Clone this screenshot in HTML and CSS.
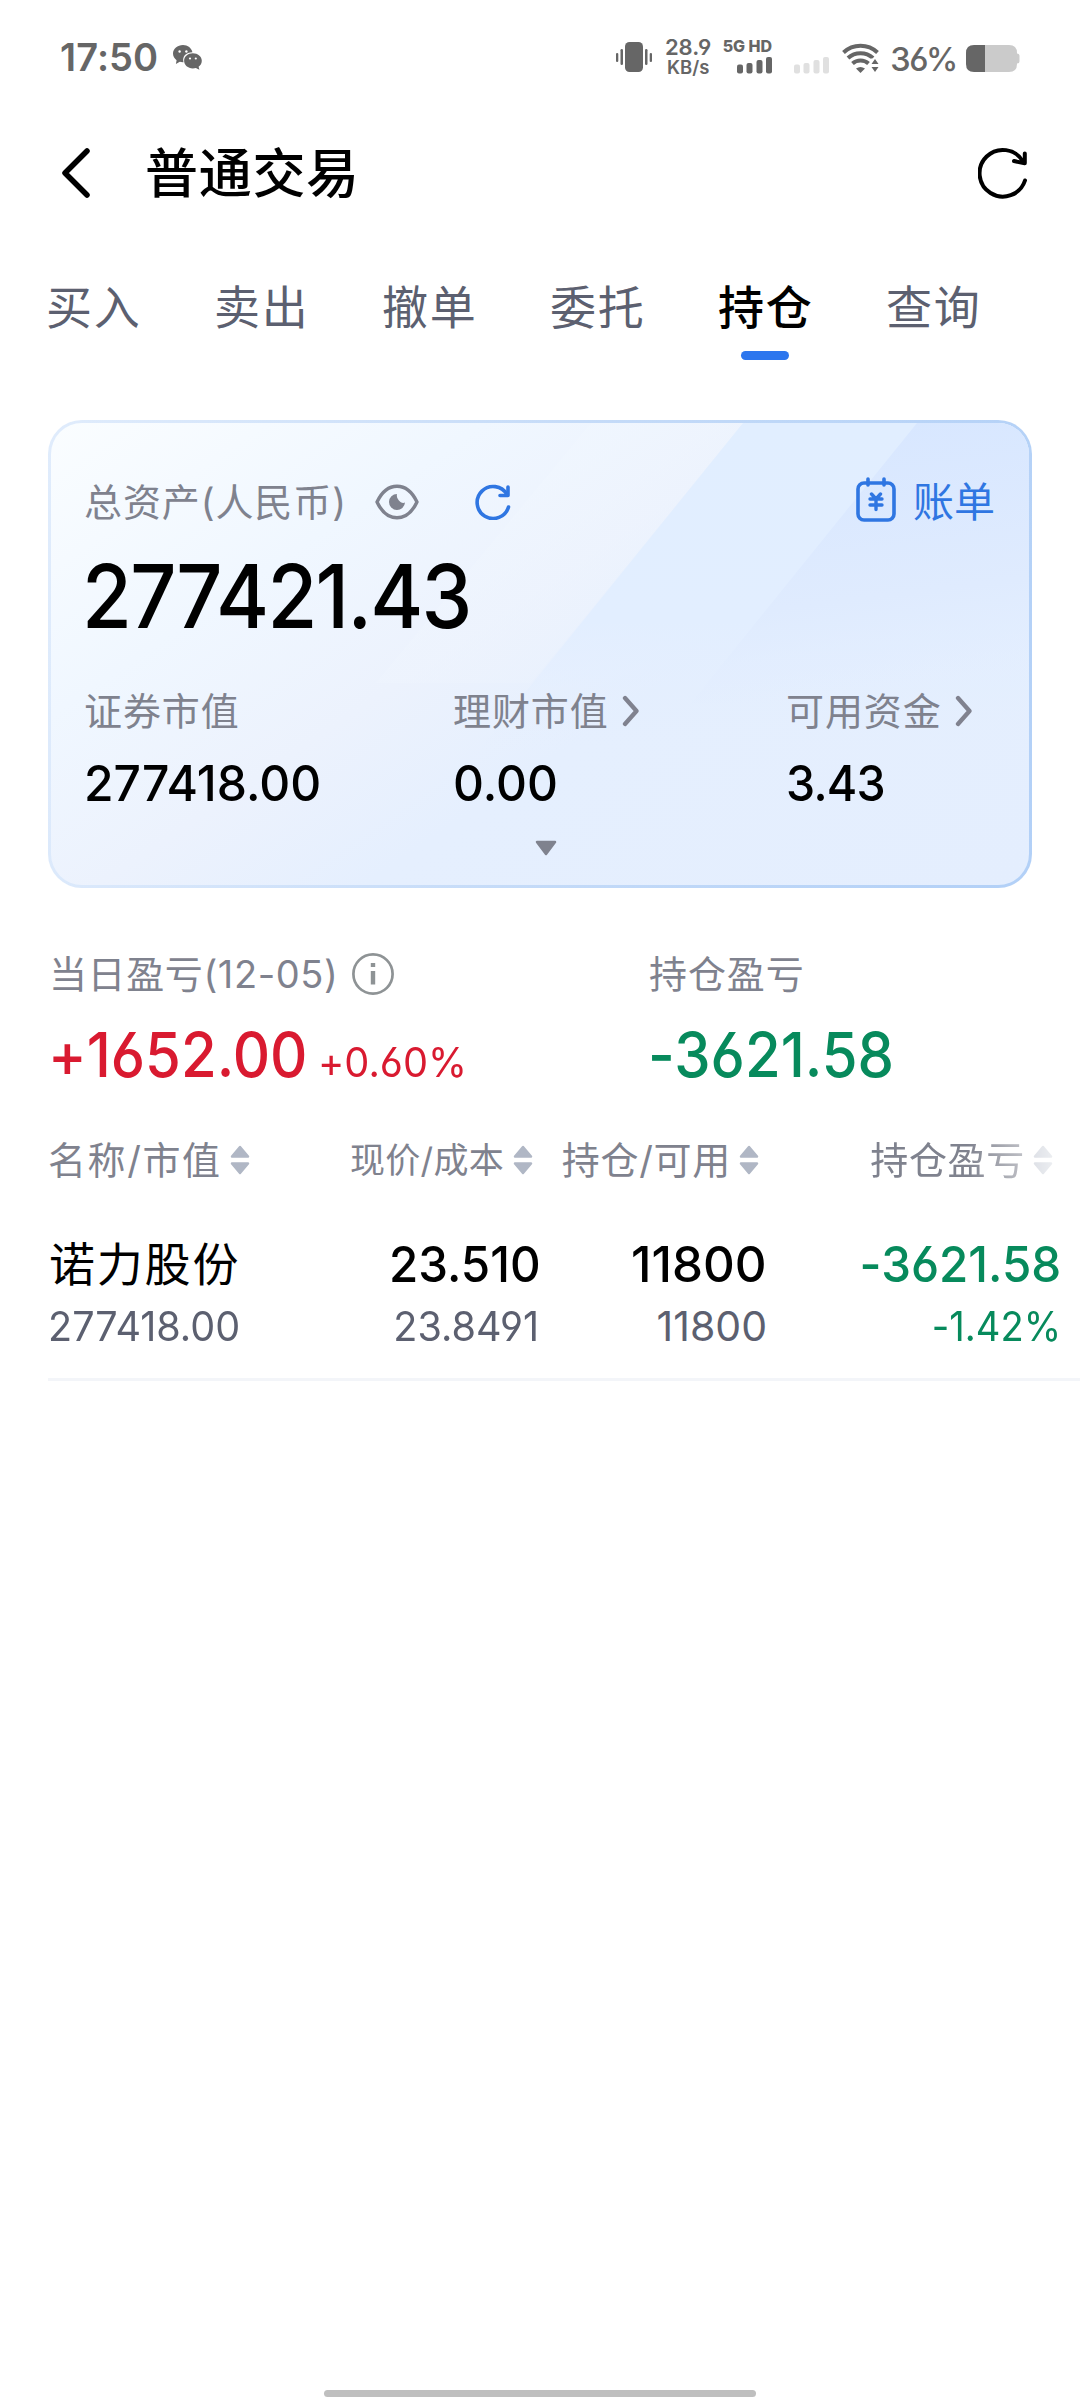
FILE: index.html
```html
<!DOCTYPE html>
<html lang="zh-CN">
<head>
<meta charset="utf-8">
<title>普通交易</title>
<link rel="stylesheet" href="styles.css">
</head>
<body>
<svg class="defs" width="0" height="0">
  <symbol id="sort" viewBox="0 0 20 30"><path d="M10 2 18 11.500H2ZM10 28 18 18.500H2Z" fill="#b0b7c5" stroke="#b0b7c5" stroke-width="2.500" stroke-linejoin="round"/></symbol>
  <symbol id="chev" viewBox="0 0 18 32"><path d="M3 3 14.500 16 3 29" fill="none" stroke="#80828f" stroke-width="4.300" stroke-linecap="round" stroke-linejoin="round"/></symbol>
</svg>
<header class="status">
  <span class="clock">17:50</span>
  <svg class="wechat" width="29" height="26" viewBox="0 0 29 26"><path fill="#666" d="M10 0C4.500 0 0 3.800 0 8.600c0 2.700 1.400 5 3.600 6.600L2.900 19l3.900-2.200c1.200.3 2.300.5 3.700.4C9 11.500 13 7.300 19.400 7.300 18.700 3.200 14.700 0 10 0Z"/><path fill="#666" d="M19.800 8.300c-4.900 0-8.700 3.300-8.700 7.500s3.800 7.600 8.700 7.600c1.100 0 2.200-.2 3.100-.5l3.500 1.900-.8-3c2-1.400 3.200-3.600 3.200-6 0-4.200-4-7.500-9-7.500Z"/><g fill="#fff"><circle cx="6.600" cy="6.500" r="1.200"/><circle cx="13.400" cy="6.500" r="1.200"/><circle cx="17" cy="13.500" r="1.100"/><circle cx="22.800" cy="13.500" r="1.100"/></g></svg>
  <div class="indicators">
    <svg class="vibrate" width="36" height="30" viewBox="0 0 36 30" fill="#666"><rect x="9" width="18" height="30" rx="4.500"/><rect x="4.500" y="7" width="2.500" height="16" rx="1.200"/><rect y="11" width="2.300" height="9" rx="1.100"/><rect x="29" y="7" width="2.500" height="16" rx="1.200"/><rect x="33.700" y="11" width="2.300" height="9" rx="1.100"/></svg>
    <div class="speed"><span class="rate">28.9</span><span class="unit">KB/s</span></div>
    <div class="cell"><span class="net">5G HD</span><svg width="35" height="17" viewBox="0 0 35 17" fill="#666"><rect y="7.500" width="6" height="9" rx="2"/><rect x="9.500" y="6" width="6" height="10.500" rx="2"/><rect x="19.500" y="3" width="6" height="13.500" rx="2"/><rect x="29" width="6" height="16.500" rx="2"/></svg></div>
    <svg class="nosim" width="35" height="17" viewBox="0 0 35 17" fill="#e0e0e0"><rect y="7.500" width="6" height="9" rx="2"/><rect x="9.500" y="6" width="6" height="10.500" rx="2"/><rect x="19.500" y="3" width="6" height="13.500" rx="2"/><rect x="29" width="6" height="16.500" rx="2"/></svg>
    <svg class="wifi" width="37" height="30" viewBox="0 0 37 30"><g fill="none" stroke="#666" stroke-width="4"><path d="M1.500 9.500C11 .5 26 .5 35.500 9.500"/><path d="M6 15C13 8.500 24 8.500 31 15"/><path d="M10.500 20.500C15 16.500 22 16.500 26.500 20.500"/></g><path fill="#666" d="M14 25.500q4.500-3 9 0L18.500 30Z"/><path fill="#fff" d="M28.500 15.500h10V30h-10z"/><path fill="#666" d="M33 16l3.500 5h-7zM33 29l3.500-5h-7z"/></svg>
    <span class="pct">36%</span>
    <svg class="battery" width="54" height="27" viewBox="0 0 54 27"><path fill="#cbcbcb" d="M18 0h25q8 0 8 8v.5q2.500 0 2.500 2.500v5q0 2.500-2.500 2.500v.5q0 8-8 8H18z"/><path fill="#666" d="M19 0v27H8q-8 0-8-8V8q0-8 8-8z"/></svg>
  </div>
</header>

<nav class="titlebar">
  <svg class="back" width="28" height="50" viewBox="0 0 28 50"><path d="M25 3 3 25 25 47" fill="none" stroke="#000" stroke-width="5.500" stroke-linecap="round" stroke-linejoin="round"/></svg>
  <h1>普通交易</h1>
  <svg class="reload" width="50" height="52" viewBox="0 0 50 52" fill="none" stroke="#000" stroke-width="4" stroke-linecap="round" stroke-linejoin="round"><path d="M47 33.500A23.300 23.300 0 1 1 45 14.500"/><path d="M46.800 6.500V16.300L36 14"/></svg>
</nav>

<nav class="tabs">
  <span class="tab">买入</span>
  <span class="tab">卖出</span>
  <span class="tab">撤单</span>
  <span class="tab">委托</span>
  <span class="tab active">持仓</span>
  <span class="tab">查询</span>
</nav>

<section class="card">
  <svg class="sheen" width="978" height="462" viewBox="0 0 978 462">
    <defs>
      <linearGradient id="a" x1="0" y1="0" x2="0" y2="1"><stop offset="0" stop-color="#e1eeff"/><stop offset=".6" stop-color="#e2eeff"/><stop offset="1" stop-color="#e4eefe" stop-opacity="0"/></linearGradient>
      <linearGradient id="b" x1=".6" y1="0" x2=".75" y2="1"><stop offset="0" stop-color="#d8e7ff"/><stop offset=".6" stop-color="#dfebfe"/><stop offset="1" stop-color="#e4eefe" stop-opacity="0"/></linearGradient>
      <linearGradient id="c" x1="0" y1="0" x2="1" y2="1"><stop offset="0" stop-color="#f2f8ff" stop-opacity=".8"/><stop offset="1" stop-color="#edf3fd" stop-opacity="0"/></linearGradient>
    </defs>
    <path fill="url(#c)" d="M540 0H692L480 260H325Z"/>
    <path fill="url(#a)" d="M692 0H978V330H425Z"/>
    <path fill="url(#b)" d="M866 0H978V280H640Z"/>
  </svg>
  <div class="summary">
    <span class="label">总资产(人民币)</span>
    <svg class="eye" width="44" height="36" viewBox="0 0 44 36"><path d="M2 18C12-3 32-3 42 18 32 39 12 39 2 18Z" fill="none" stroke="#7f828e" stroke-width="3.400" stroke-linejoin="round"/><path d="M22 10A8 8 0 1 0 30 18.500Q28 19.500 25.500 18 21 14.500 22 10Z" fill="#7f828e"/></svg>
    <svg class="refresh" width="36" height="36" viewBox="0 0 36 36" fill="none" stroke="#2f76e2" stroke-width="3.600" stroke-linecap="round" stroke-linejoin="round"><path d="M33.500 23A16 16 0 1 1 32 10.500"/><path d="M33 3V11.500H25"/></svg>
    <a class="bill">
      <svg width="40" height="45" viewBox="0 0 40 45" fill="none" stroke="#2f76e2" stroke-width="3.600" stroke-linecap="round"><rect x="2" y="6" width="36" height="37" rx="6"/><path d="M12 2V8M28 2V8"/><path d="M15.500 17 20 22 24.500 17M14 22H26M14 28H26M20 22V32.500" stroke-width="3.400"/></svg>
      <span>账单</span>
    </a>
  </div>
  <div class="total"><span class="num">277421.43</span></div>
  <div class="figures">
    <div class="figure"><div class="label"><span>证券市值</span></div><div class="amount"><span class="num">277418.00</span></div></div>
    <div class="figure"><div class="label"><span>理财市值</span><svg class="chev" width="18" height="32"><use href="#chev"/></svg></div><div class="amount"><span class="num">0.00</span></div></div>
    <div class="figure"><div class="label"><span>可用资金</span><svg class="chev" width="18" height="32"><use href="#chev"/></svg></div><div class="amount tight"><span class="num">3.43</span></div></div>
  </div>
  <svg class="expand" width="22" height="16" viewBox="0 0 22 16"><path d="M2 2H20L11 14Z" fill="#7f828e" stroke="#7f828e" stroke-width="2.500" stroke-linejoin="round"/></svg>
</section>

<section class="pnl">
  <div class="today">
    <div class="label dated"><span>当日盈亏(12-05)</span><svg class="info" width="42" height="42" viewBox="0 0 42 42"><circle cx="21" cy="21" r="19.600" fill="none" stroke="#8e9395" stroke-width="2.700"/><path fill="#8e9395" d="M18.800 10h4.400v4h-4.400zM18.800 18h4.400v13.500h-4.400z"/></svg></div>
    <div class="value up"><span class="num">+1652.00</span><small class="num">+0.60%</small></div>
  </div>
  <div class="holding">
    <div class="label">持仓盈亏</div>
    <div class="value down"><span class="num">-3621.58</span></div>
  </div>
</section>

<section class="positions">
  <div class="grid head">
    <div class="th"><span>名称/市值</span><svg width="20" height="30"><use href="#sort"/></svg></div>
    <div class="th small"><span>现价/成本</span><svg width="20" height="30"><use href="#sort"/></svg></div>
    <div class="th"><span>持仓/可用</span><svg width="20" height="30"><use href="#sort"/></svg></div>
    <div class="th fade"><span>持仓盈亏</span><svg width="20" height="30"><use href="#sort"/></svg></div>
  </div>
  <div class="grid row">
    <div class="cellbox"><div class="main name"><span>诺力股份</span></div><div class="sub"><span class="num">277418.00</span></div></div>
    <div class="cellbox"><div class="main"><span class="num">23.510</span></div><div class="sub cost"><span class="num">23.8491</span></div></div>
    <div class="cellbox"><div class="main wide"><span class="num">11800</span></div><div class="sub wide"><span class="num">11800</span></div></div>
    <div class="cellbox down"><div class="main"><span class="num">-3621.58</span></div><div class="sub"><span class="num">-1.42%</span></div></div>
  </div>
</section>
<div class="home"></div>
</body>
</html>
```
FILE: styles.css
```css
* { box-sizing: border-box; }
body {
  margin: 0;
  width: 1080px;
  height: 2400px;
  overflow: hidden;
  position: relative;
  background: #fff;
  color: #000;
  font-family: Inter, "Noto Sans CJK SC", sans-serif;
  font-feature-settings: "cv03", "cv04", "calt" 0;
}
svg { display: block; flex: none; }
.defs { position: absolute; }

/* slightly condensed figures */
.num { display: inline-block; transform: scaleX(var(--sx, .95)); transform-origin: left center; }

.status { height: 110px; display: flex; align-items: flex-start; padding: 0 60px 0 60px; color: #666; }
.clock { font-size: 38px; font-weight: 600; line-height: 40px; margin-top: 37px; letter-spacing: .1px; }
.wechat { margin: 45px 0 0 15px; }
.indicators { display: flex; margin-left: auto; }
.vibrate { margin-top: 42px; }
.speed { width: 46px; margin: 37px 0 0 13px; display: flex; flex-direction: column; align-items: center; white-space: nowrap; }
.rate { font-size: 22px; font-weight: 600; line-height: 21px; }
.unit { font-size: 18.500px; font-weight: 600; line-height: 19px; }
.cell { width: 50px; margin: 38px 0 0 11px; display: flex; flex-direction: column; align-items: flex-end; gap: 2px; white-space: nowrap; }
.net { font-size: 16px; font-weight: 800; line-height: 17px; }
.nosim { margin: 57px 0 0 22px; }
.wifi { margin: 43px 0 0 13px; }
.pct { font-size: 32.500px; font-weight: 500; line-height: 34px; margin: 43px 0 0 11px; letter-spacing: -1.300px; }
.battery { margin: 45px 0 0 9px; }

.titlebar { height: 126px; display: flex; align-items: center; padding: 0 52px 0 62px; }
.titlebar h1 { margin: 2px auto 0 55px; font-size: 53px; line-height: 60px; font-weight: 500; letter-spacing: .7px; }

.tabs { height: 184px; padding: 41px 0 0 46px; display: grid; grid-template-columns: repeat(6, 168px); }
.tab { font-size: 46px; line-height: 60px; color: #5c6070; letter-spacing: 1.800px; display: flex; flex-direction: column; align-items: flex-start; }
.tab.active { color: #000; font-weight: 500; }
.tab.active::after { content: ""; width: 48px; height: 9px; border-radius: 5px; background: #2c76ee; margin: 14px 0 0 23px; }

.card {
  position: relative;
  margin: 0 48px;
  height: 468px;
  border: 3px solid transparent;
  border-radius: 34px;
  padding: 55px 34px 0 33px;
  background:
    linear-gradient(146deg, #fafdff 0%, #f0f7ff 26%, #ecf2fd 44%, #e5effe 60%, #e4eefe 100%) padding-box,
    linear-gradient(100deg, #e0ecfc 0%, #c5dbf8 50%, #b2d0f7 100%) border-box;
}
.sheen { position: absolute; inset: 0; border-radius: 31px; }
.summary, .total, .figures, .expand { position: relative; }
.label { display: flex; align-items: center; height: 48px; line-height: 48px; font-size: 38px; color: #7f828e; letter-spacing: .9px; white-space: nowrap; }
.summary { display: flex; align-items: center; height: 48px; }
.eye { margin-left: 28px; }
.refresh { margin-left: 56px; }
.bill { margin-left: auto; display: flex; align-items: center; gap: 17px; font-size: 41px; line-height: 48px; color: #2f76e2; white-space: nowrap; }
.bill svg { margin-top: -6px; }
.total { --sx: .92; margin: 30px 0 0 -2px; font-size: 88px; line-height: 80px; font-weight: 500; letter-spacing: -1.900px; }
.figures { margin-top: 51px; display: grid; grid-template-columns: 369px 333px 1fr; }
.amount { --sx: .96; margin: 24px 0 0; font-size: 50px; line-height: 48px; font-weight: 500; }
.amount.tight { --sx: .93; letter-spacing: -.8px; }
.chev { margin-left: 13px; }
.expand { margin: 33px 0 0 451px; }

.pnl { display: grid; grid-template-columns: 600px 1fr; padding: 62px 0 0 49px; }
.label.dated { letter-spacing: .6px; }
.info { margin-left: 13px; }
.value { --sx: .935; margin: 22px 0 0 -1px; height: 70px; font-size: 62px; line-height: 70px; font-weight: 500; white-space: nowrap; }
.value small { --sx: .97; font-size: 41px; font-weight: 400; margin-left: -8px; }
.up { color: #d91a30; }
.down { color: #078a5c; }

.positions { padding: 46px 0 0 48px; }
.grid { display: grid; grid-template-columns: 203px 290px 226px 294px; }
.th { display: flex; align-items: center; justify-content: flex-end; gap: 8px; height: 48px; padding-right: 8px; font-size: 38px; line-height: 48px; letter-spacing: .7px; color: #7f828e; white-space: nowrap; }
.th:first-child { justify-content: flex-start; padding: 0; letter-spacing: 1.600px; }
.th.small { font-size: 35px; letter-spacing: .3px; gap: 9px; }
.th.fade { -webkit-mask-image: linear-gradient(90deg, #000 200px, rgba(0,0,0,.25) 285px); mask-image: linear-gradient(90deg, #000 200px, rgba(0,0,0,.25) 285px); }
.row { margin-top: 56px; padding-bottom: 32px; border-bottom: 3px solid #f3f5f9; }
.cellbox { text-align: right; white-space: nowrap; }
.cellbox .num { transform-origin: right center; }
.cellbox:first-child { text-align: left; }
.cellbox:first-child .num { transform-origin: left center; }
.main { font-size: 50px; line-height: 48px; height: 48px; font-weight: 500; }
.main.name { font-size: 46px; font-weight: 400; letter-spacing: 1.800px; padding-left: 1px; }
.sub { --sx: .965; margin-top: 18px; font-size: 41px; line-height: 40px; height: 40px; color: #5c6070; }
.sub.cost { padding-right: 2px; }
.main.wide { --sx: .985; }
.sub.wide { --sx: 1; }
.down .sub { --sx: .93; color: #078a5c; }

.home { position: absolute; left: 324px; bottom: 3px; width: 432px; height: 7px; border-radius: 4px; background: #bfbfbf; }
```
